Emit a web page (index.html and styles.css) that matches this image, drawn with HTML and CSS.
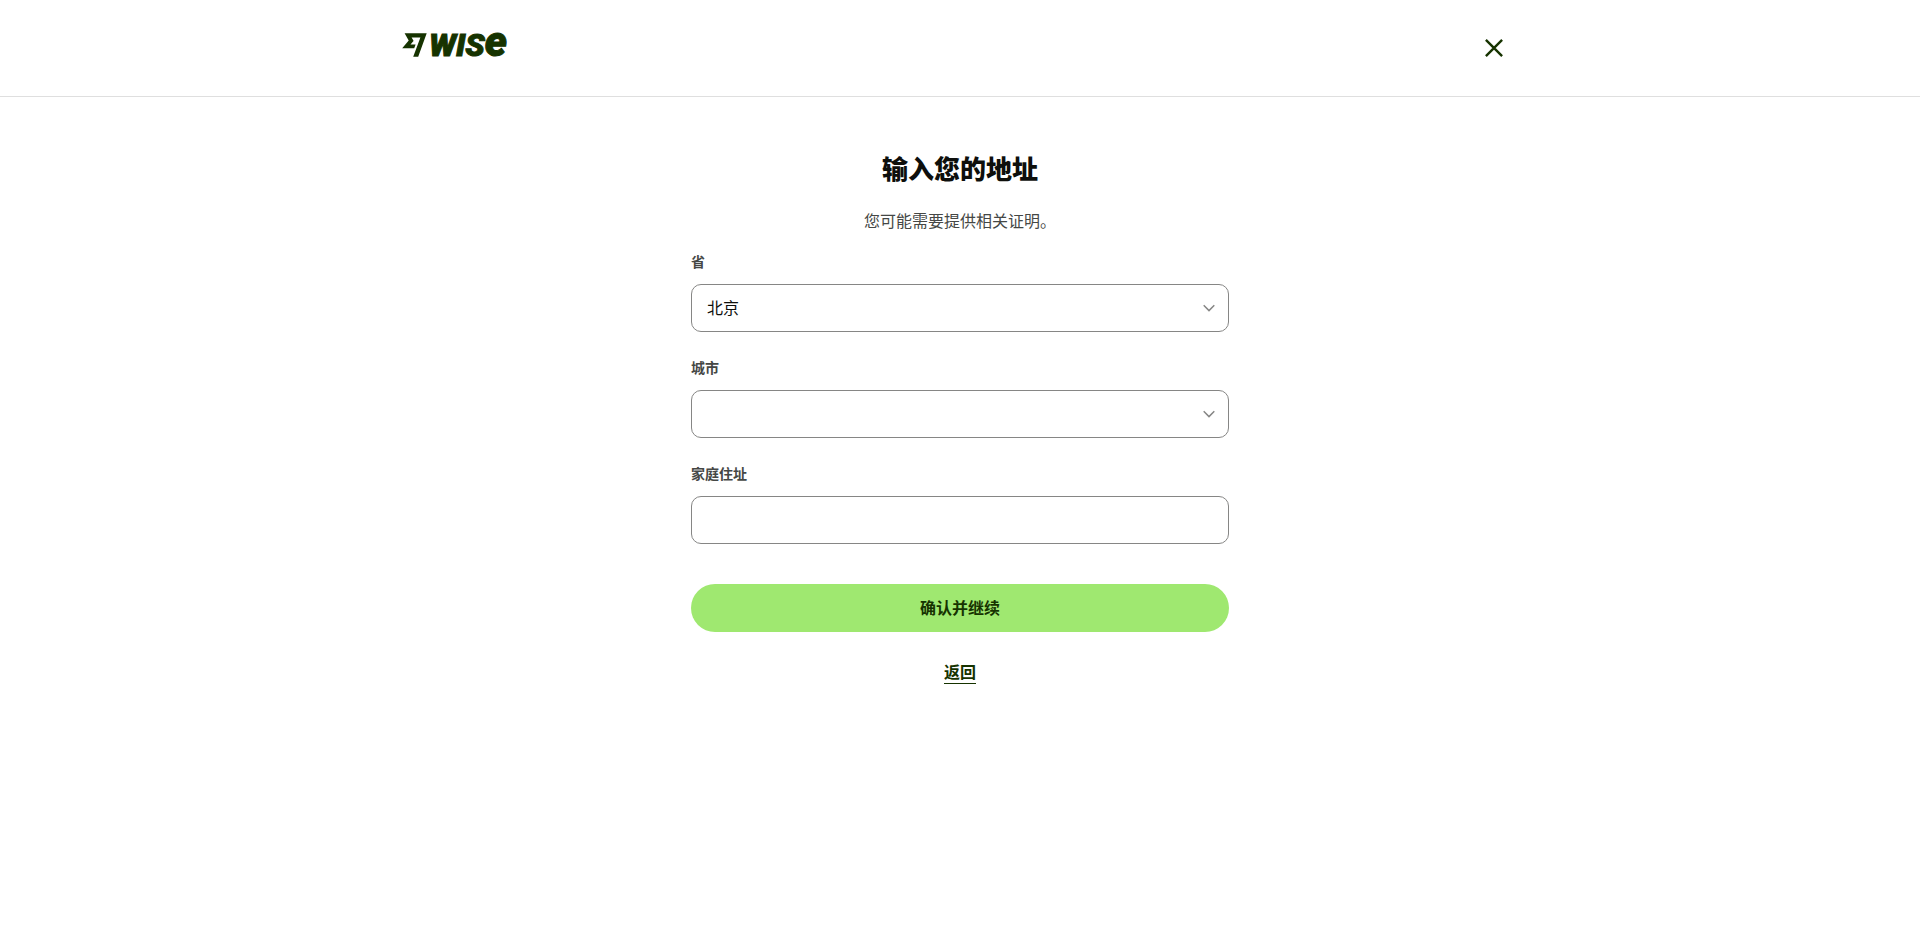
FILE: index.html
```
<!DOCTYPE html>
<html lang="zh-CN">

<head>
    <meta charset="utf-8">
    <title>输入您的地址 - Wise</title>
    <meta name="viewport" content="width=device-width, initial-scale=1.0">
    <link rel="stylesheet" href="styles.css">
</head>

<body>
    <header class="header">
        <div class="header-inner">
            <a class="logo" href="#" aria-label="Wise">
                <svg width="106" height="24" viewBox="0 0 106 24">
                    <path d="M6.7 7.4 0.2 15.2h12l1.4-3.8H8.5l3-3.5v-.1L9.6 4.4h8.8L11.2 23.8h5L24.7.3H2.6z" />
                    <text class="logo-caps" x="27" y="23">WIS<tspan class="logo-e">e</tspan></text>
                </svg>
            </a>
            <button class="close" type="button" aria-label="关闭">
                <svg width="24" height="24" viewBox="0 0 24 24">
                    <path d="M3.9 3.9 20.1 20.1M20.1 3.9 3.9 20.1" />
                </svg>
            </button>
        </div>
    </header>

    <main class="content">
        <h1>输入您的地址</h1>
        <p class="intro">您可能需要提供相关证明。</p>

        <form>
            <div class="field">
                <label for="province">省</label>
                <div class="select">
                    <select id="province" class="control">
                        <option>北京</option>
                    </select>
                    <svg class="chevron" width="16" height="16" viewBox="0 0 16 16">
                        <path d="M2.7 5.3 8 10.6 13.3 5.3" />
                    </svg>
                </div>
            </div>
            <div class="field">
                <label for="city">城市</label>
                <div class="select">
                    <select id="city" class="control">
                        <option></option>
                    </select>
                    <svg class="chevron" width="16" height="16" viewBox="0 0 16 16">
                        <path d="M2.7 5.3 8 10.6 13.3 5.3" />
                    </svg>
                </div>
            </div>
            <div class="field">
                <label for="address">家庭住址</label>
                <input id="address" class="control" type="text">
            </div>
            <button class="submit" type="submit">确认并继续</button>
        </form>
        <a class="back" href="#">返回</a>
    </main>
</body>

</html>
```
FILE: styles.css
```
* {
    box-sizing: border-box;
}

body {
    margin: 0;
    background: #fff;
    color: #454745;
    font-family: Inter, "Noto Sans CJK SC", sans-serif;
    font-size: 16px;
    line-height: 24px;
}

.header {
    border-bottom: 1px solid #dfdfdf;
}

.header-inner {
    display: flex;
    justify-content: space-between;
    align-items: center;
    max-width: 1164px;
    margin: 0 auto;
    padding: 24px;
}

.logo {
    display: flex;
    padding-bottom: 6px;
}

.logo svg {
    fill: #163300;
    overflow: visible;
}

.logo-caps {
    font-family: Roboto, sans-serif;
    font-size: 32px;
    font-style: italic;
    font-weight: 900;
    stroke: #163300;
    stroke-width: 1;
}

.logo-e {
    font-size: 42px;
}

.close {
    display: flex;
    align-items: center;
    justify-content: center;
    width: 48px;
    height: 48px;
    padding: 0;
    border: 0;
    background: none;
    cursor: pointer;
}

.close path {
    fill: none;
    stroke: #163300;
    stroke-width: 2.4;
}

.content {
    display: flex;
    flex-direction: column;
    align-items: center;
    max-width: 570px;
    margin: 0 auto;
    padding: 57px 16px;
}

h1 {
    margin: 0 0 23px;
    color: #0e0f0c;
    font-size: 26px;
    font-weight: 900;
    line-height: 32px;
}

.intro {
    margin: 0 0 19px;
}

form {
    width: 100%;
}

.field {
    margin-bottom: 26px;
}

label {
    display: block;
    margin-bottom: 12px;
    font-size: 14px;
    font-weight: 600;
    line-height: 20px;
}

.select {
    position: relative;
}

.control {
    display: block;
    width: 100%;
    height: 48px;
    padding: 0 15px;
    border: 1px solid #868685;
    border-radius: 10px;
    background: #fff;
    color: #0e0f0c;
    font: inherit;
    appearance: none;
}

.chevron {
    position: absolute;
    top: 16px;
    right: 12px;
    fill: none;
    stroke: #868685;
    stroke-width: 1.5;
    pointer-events: none;
}

.submit {
    display: block;
    width: 100%;
    height: 48px;
    margin-top: 40px;
    border: 0;
    border-radius: 24px;
    background: #9fe870;
    color: #163300;
    font: inherit;
    font-weight: 600;
    cursor: pointer;
}

.back {
    margin-top: 28px;
    color: #163300;
    font-weight: 600;
    text-decoration: underline;
    text-decoration-thickness: 1px;
    text-underline-offset: 5px;
}
```
